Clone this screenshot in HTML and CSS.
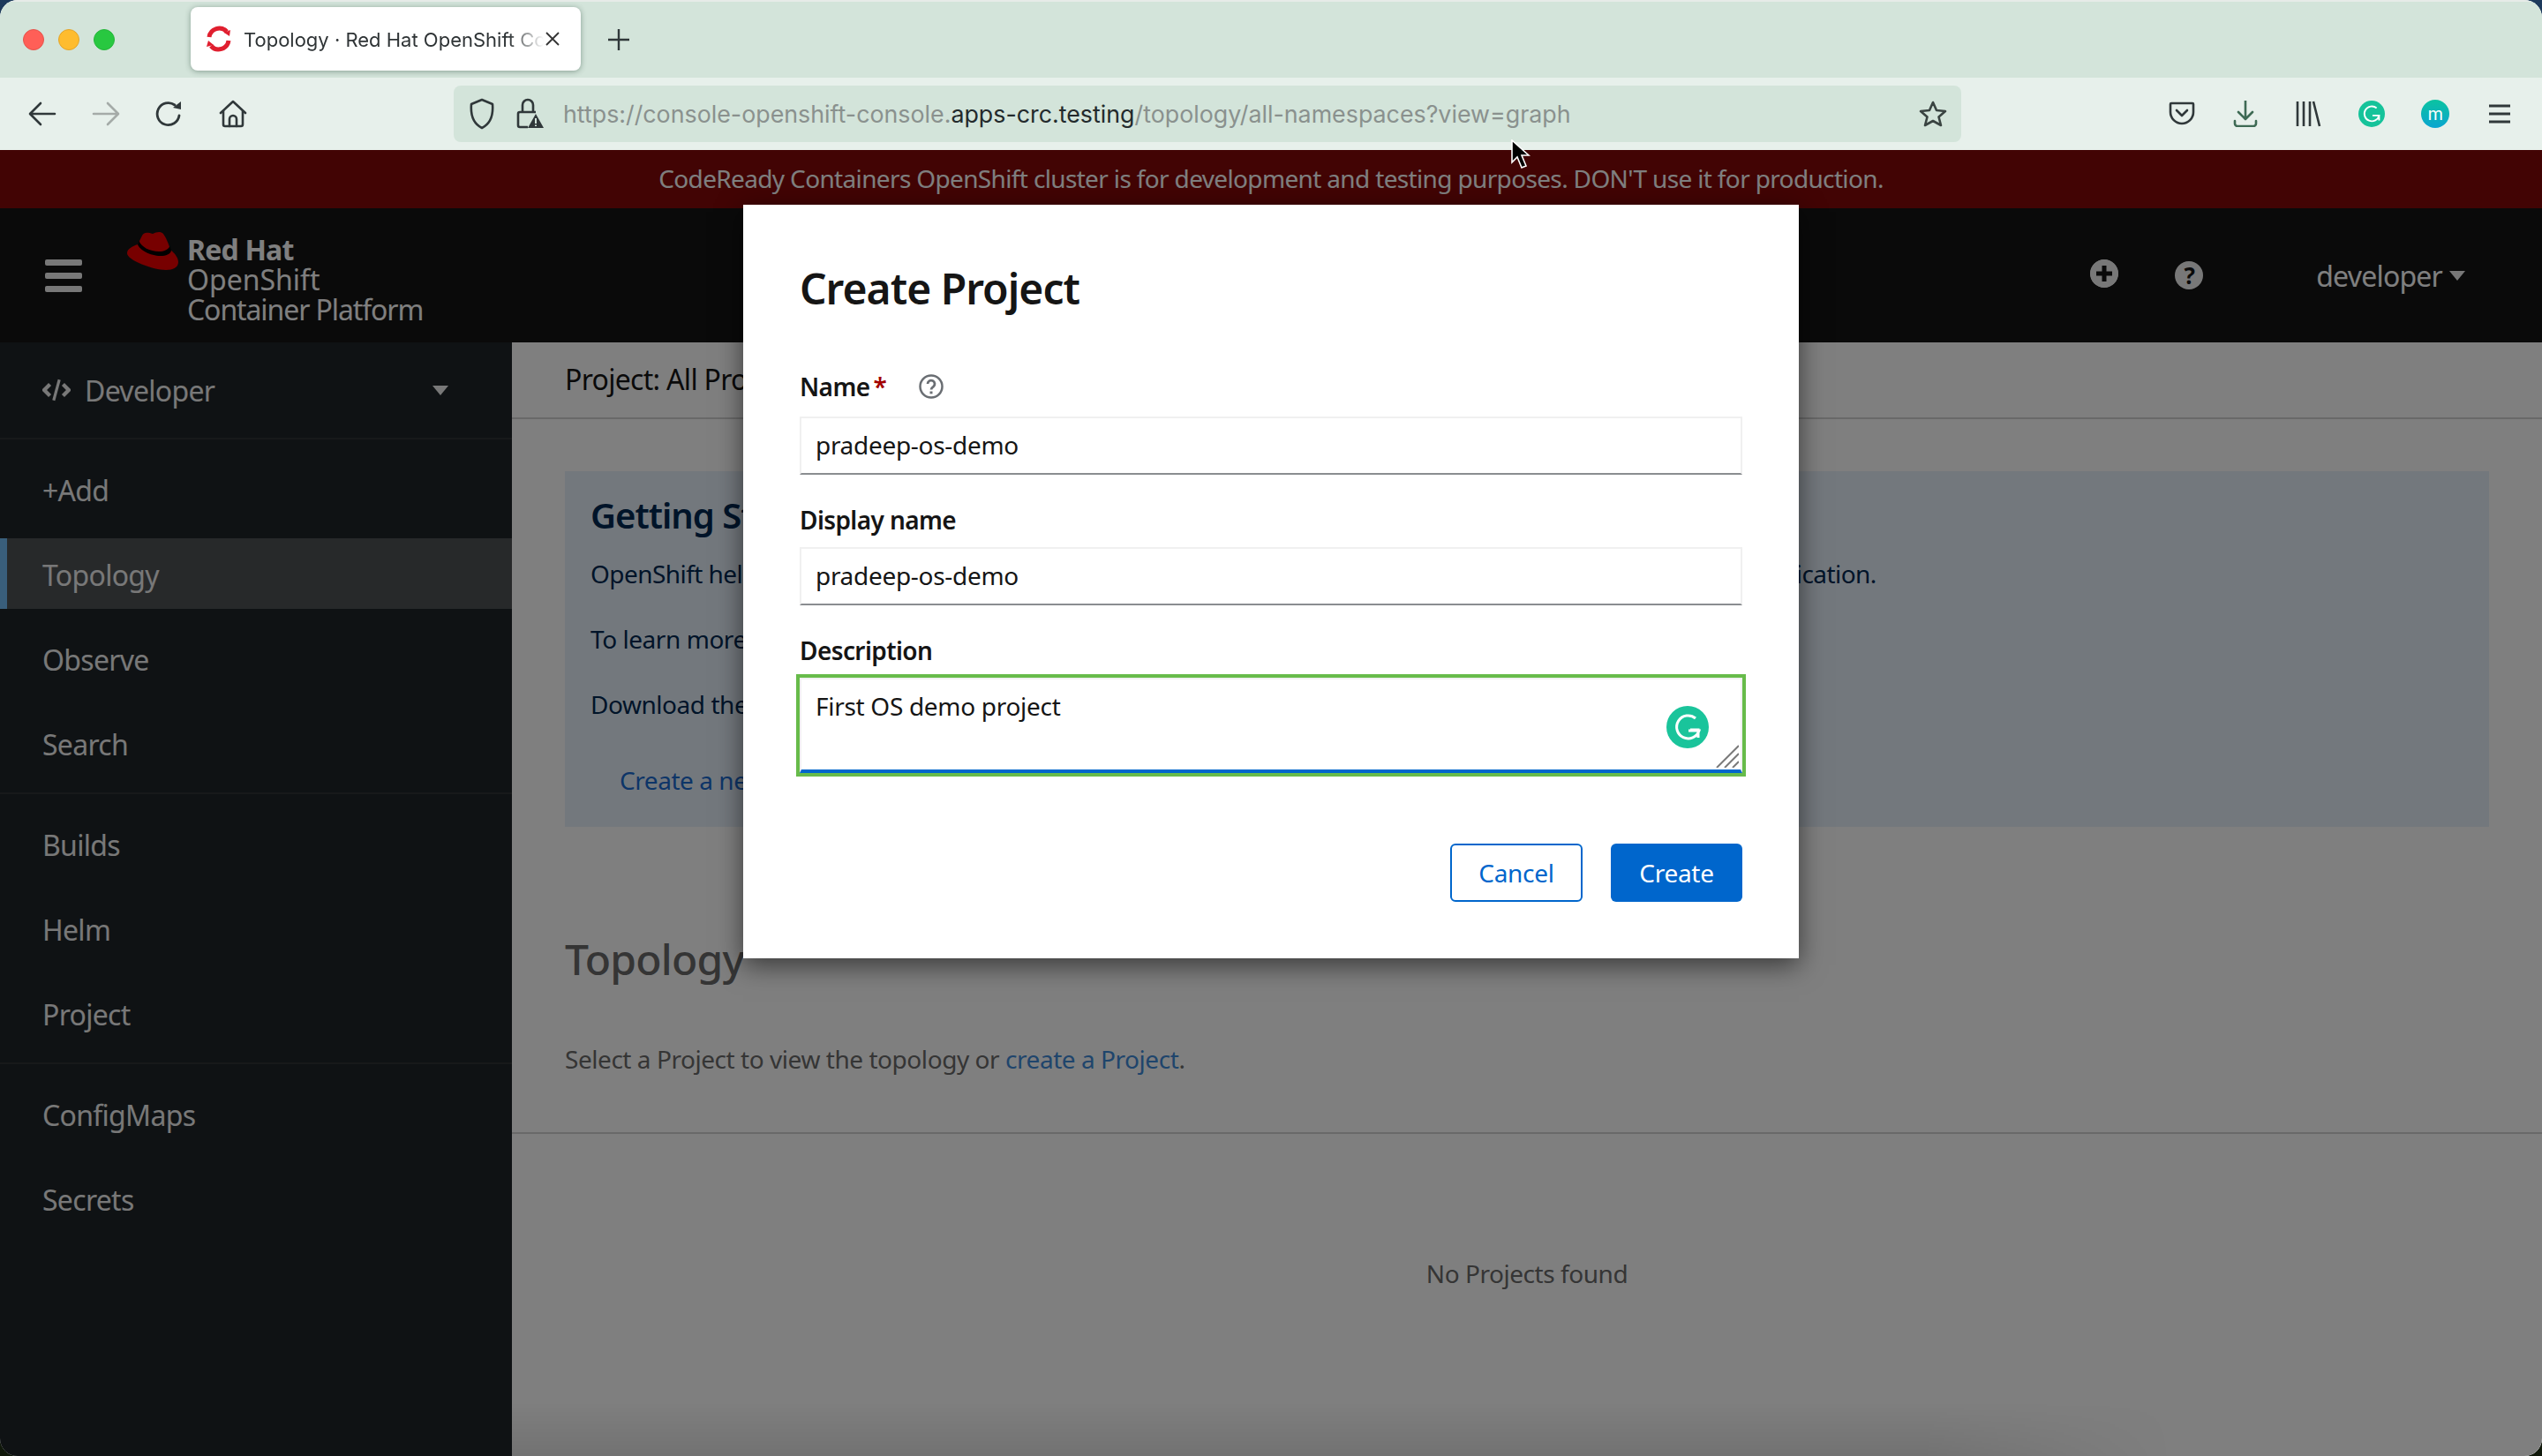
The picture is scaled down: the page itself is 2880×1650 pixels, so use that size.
FILE: index.html
```html
<!DOCTYPE html>
<html lang="en">
<head>
    <meta charset="UTF-8">
    <title>Topology · Red Hat OpenShift Container Platform</title>
    <link rel="stylesheet" href="styles.css">
</head>
<body>
<div class="window">
    <div class="titlebar">
        <div class="lights">
            <span class="light red"></span>
            <span class="light yellow"></span>
            <span class="light green"></span>
        </div>
        <div class="tab">
            <svg class="favicon" viewBox="0 0 32 32" fill="none" stroke="#e01f2f" stroke-width="5">
                <path d="M5 14A11.5 11.5 0 0 1 25 8"/>
                <path d="M27 18A11.5 11.5 0 0 1 7 24"/>
                <path d="M22 9l7-3-1 7z" fill="#e01f2f" stroke="none"/>
                <path d="M10 23l-8 2 2-7z" fill="#e01f2f" stroke="none"/>
            </svg>
            <span class="tab-title">Topology · Red Hat OpenShift Container Platform</span>
            <svg class="tab-close" viewBox="0 0 20 20" stroke="#333" stroke-width="1.8"><path d="M3 3l14 14M17 3L3 17"/></svg>
        </div>
        <svg class="new-tab" viewBox="0 0 24 24" stroke="#30383a" stroke-width="2.4"><path d="M12 0v24M0 12h24"/></svg>
    </div>

    <div class="toolbar">
        <div class="nav-buttons">
            <svg class="tool-icon" viewBox="0 0 32 32" fill="none" stroke="#30383a" stroke-width="2.6" stroke-linecap="round" stroke-linejoin="round"><path d="M30 16H3M14 4L2 16l12 12"/></svg>
            <svg class="tool-icon" viewBox="0 0 32 32" fill="none" stroke="#a5aba8" stroke-width="2.6" stroke-linecap="round" stroke-linejoin="round"><path d="M2 16h27M18 4l12 12-12 12"/></svg>
            <svg class="tool-icon" viewBox="0 0 32 32" fill="none" stroke="#30383a" stroke-width="2.8" stroke-linecap="round"><path d="M27 18A12.5 12.5 0 1 1 22 6"/><path d="M20 9L29 2v9z" fill="#30383a" stroke="none"/></svg>
            <svg class="tool-icon" viewBox="0 0 32 32" fill="none" stroke="#30383a" stroke-width="2.6" stroke-linejoin="round" stroke-linecap="round"><path d="M2 15L16 2l14 13"/><path d="M5 13v15a2 2 0 0 0 2 2h18a2 2 0 0 0 2-2V13"/><path d="M12 30v-8a4 4 0 0 1 8 0v8"/></svg>
        </div>
        <div class="urlbar">
            <svg class="url-shield" viewBox="0 0 30 36" fill="none" stroke="#30383a" stroke-width="2.6" stroke-linejoin="round"><path d="M15 2l12 5c1 12-2 22-12 27C5 29 2 19 3 7z"/></svg>
            <svg class="url-lock" viewBox="0 0 32 36" fill="none" stroke="#30383a" stroke-width="2.6"><path d="M8 16V8a6 6 0 0 1 12 0v8"/><path d="M14 33H5a2 2 0 0 1-2-2V18a2 2 0 0 1 2-2h18"/><path d="M23 18l9 16H14z" fill="#30383a" stroke="none"/><path d="M23 23v6M23 30.5v1.5" stroke="#d3e4da" stroke-width="2"/></svg>
            <span class="url-text">https://console-openshift-console.<b>apps-crc.testing</b>/topology/all-namespaces?view=graph</span>
            <svg class="url-star" viewBox="0 0 32 32" fill="none" stroke="#3a4442" stroke-width="2.6" stroke-linejoin="round"><path d="M16 3l4 9 10 1-7.500 6.500L25 29l-9-5-9 5 2.500-9.500L2 13l10-1z"/></svg>
        </div>
        <div class="addons">
            <svg class="addon" viewBox="0 0 30 30" fill="none" stroke="#30383a" stroke-width="2.600" stroke-linejoin="round" stroke-linecap="round"><path d="M3 3h24a1 1 0 0 1 1 1v9a13 13 0 0 1-26 0V4a1 1 0 0 1 1-1z"/><path d="M9 11l6 6 6-6"/></svg>
            <svg class="addon" viewBox="0 0 30 30" fill="none" stroke="#3e6a54" stroke-width="2.600" stroke-linecap="round" stroke-linejoin="round"><path d="M15 0v20M7 13l8 8 8-8"/><path d="M3 23v3a3 3 0 0 0 3 3h18a3 3 0 0 0 3-3v-3"/></svg>
            <svg class="addon" viewBox="0 0 30 30" fill="none" stroke="#30383a" stroke-width="2.600"><path d="M3 1v28M10 1v28M17 1v28M21 1l7 28"/></svg>
            <svg class="addon" viewBox="0 0 32 32"><circle cx="16" cy="16" r="16" fill="#15c39a"/><path d="M22 9a9 9 0 1 0 3 9h-8M25 24v-6h-6" fill="none" stroke="#fff" stroke-width="2"/></svg>
            <span class="addon-m">m</span>
            <svg class="addon" viewBox="0 0 30 30" stroke="#30383a" stroke-width="2.800"><path d="M3 6h24M3 15h24M3 24h24"/></svg>
        </div>
    </div>

    <div class="page">
        <div class="banner">CodeReady Containers OpenShift cluster is for development and testing purposes. DON'T use it for production.</div>

        <div class="masthead">
            <div class="hamburger"><span></span><span></span><span></span></div>
            <svg class="hat" viewBox="0 0 58 44">
                <path d="M17 5C19 1 23 1 29 3C33 1 38 0 41 3C44 7 47 14 49 21C54 25 58 30 58 35C58 41 52 44 44 44C30 44 0 33 0 25C0 20 6 17 12 15z" fill="#ee0000"/>
                <path d="M12 15C14 21 26 28 38 28C44 28 49 26 50 22L48.500 17C46 21 42 23 36 23C26 23 16 18 13.500 11z" fill="#000"/>
            </svg>
            <div class="brand">
                <div class="brand-top">Red Hat</div>
                <div>OpenShift</div>
                <div class="brand-sub">Container Platform</div>
            </div>
            <div class="mast-right">
                <svg class="round-icon plus" viewBox="0 0 32 32"><circle cx="16" cy="16" r="16" fill="#f0f0f0"/><path d="M16 7v18M7 16h18" stroke="#151515" stroke-width="5"/></svg>
                <span class="round-icon help">?</span>
                <span class="user">developer</span>
                <span class="caret"></span>
            </div>
        </div>

        <div class="layout">
            <aside class="sidebar">
                <div class="perspective">
                    <svg class="code-icon" viewBox="0 0 30 24" fill="none" stroke="#f0f0f0" stroke-width="4"><path d="M8 6l-6 6 6 6M22 6l6 6-6 6"/><path d="M18 1l-6 22" stroke-width="3"/></svg>
                    <span>Developer</span>
                    <span class="caret perspective-caret"></span>
                </div>
                <div class="nav-group">
                    <a class="nav-item">+Add</a>
                    <a class="nav-item current">Topology</a>
                    <a class="nav-item">Observe</a>
                    <a class="nav-item">Search</a>
                </div>
                <div class="nav-group">
                    <a class="nav-item">Builds</a>
                    <a class="nav-item">Helm</a>
                    <a class="nav-item">Project</a>
                </div>
                <div class="nav-group last">
                    <a class="nav-item">ConfigMaps</a>
                    <a class="nav-item">Secrets</a>
                </div>
            </aside>

            <main class="main">
                <div class="project-bar">Project: All Projects</div>
                <section class="getting-started">
                    <h2>Getting Started in OpenShift</h2>
                    <p class="intro">OpenShift helps you quickly develop, host, and scale applications. To get started, create a project for the application.</p>
                    <p>To learn more, visit the OpenShift documentation.</p>
                    <p>Download the oc command line tool.</p>
                    <a class="card-link">Create a new project</a>
                </section>
                <div class="topology-head">
                    <h1>Topology</h1>
                    <p>Select a Project to view the topology or <a>create a Project</a>.</p>
                </div>
                <div class="empty">No Projects found</div>
            </main>
        </div>

        <div class="backdrop">
            <div class="modal">
                <h2 class="modal-title">Create Project</h2>
                <div class="field name-field">
                    <label>Name <span class="req">*</span><svg class="field-help" viewBox="0 0 28 28" fill="none" stroke="#6a6e73" stroke-width="2.500"><circle cx="14" cy="14" r="12.500"/><path d="M10 11a4 4 0 1 1 6.500 3.200c-1.500 1-2.500 1.800-2.500 3.300" stroke-width="2.800"/><path d="M14 19.500v2.800" stroke-width="3"/></svg></label>
                    <div class="input">pradeep-os-demo</div>
                </div>
                <div class="field">
                    <label>Display name</label>
                    <div class="input">pradeep-os-demo</div>
                </div>
                <div class="field">
                    <label>Description</label>
                    <div class="textarea">
                        First OS demo project
                        <svg class="grammarly" viewBox="0 0 48 48"><circle cx="24" cy="24" r="24" fill="#1ac49b"/><path d="M33 14a13 13 0 1 0 4 14H25M36 36v-9h-9" fill="none" stroke="#fff" stroke-width="3"/></svg>
                        <svg class="resize" viewBox="0 0 26 26" stroke="#7a7a7a" stroke-width="2"><path d="M1 26L26 1M10 26L26 10M19 26l7-7"/></svg>
                    </div>
                </div>
                <div class="modal-actions">
                    <button class="btn secondary">Cancel</button>
                    <button class="btn primary">Create</button>
                </div>
            </div>
            <div class="bottom-shade"></div>
        </div>

        <svg class="cursor" viewBox="0 0 22 34"><path d="M1 1v25l6-6 5 12 5-2-5-12h8z" fill="#000" stroke="#fff" stroke-width="1.600"/></svg>
    </div>
</div>
</body>
</html>
```

FILE: styles.css
```css
* {
    box-sizing: border-box;
}
html, body {
    margin: 0;
    padding: 0;
    height: 100%;
}
body {
    background: linear-gradient(#1d3a5c, #10180a);
    font-family: "Noto Sans", sans-serif;
    font-size: 28px;
    overflow: hidden;
}
h1, h2, p {
    margin: 0;
    font-weight: normal;
}

.window {
    display: flex;
    flex-direction: column;
    height: 1650px;
    border-radius: 20px;
    overflow: hidden;
    background: #fff;
}

/* browser chrome */
.titlebar {
    display: flex;
    align-items: center;
    height: 88px;
    background: #d3e4da;
    border-top: 2px solid #e6ebe8;
    padding-left: 26px;
}
.lights {
    display: flex;
    gap: 16px;
    width: 190px;
}
.light {
    width: 24px;
    height: 24px;
    border-radius: 50%;
}
.light.red { background: #ff5f57; border: 1px solid #e5534b; }
.light.yellow { background: #febc2e; border: 1px solid #e3a52a; }
.light.green { background: #28c840; border: 1px solid #25b53a; }

.tab {
    display: flex;
    align-items: center;
    width: 442px;
    height: 72px;
    margin-top: -2px;
    padding-left: 16px;
    background: #fff;
    border-radius: 8px;
    box-shadow: 0 1px 6px rgba(40, 70, 55, 0.45);
}
.favicon {
    width: 32px;
    height: 32px;
    flex: none;
}
.tab-title {
    width: 340px;
    margin-left: 12px;
    padding-top: 2px;
    font-family: Inter, sans-serif;
    font-size: 22px;
    color: #2f3436;
    white-space: nowrap;
    overflow: hidden;
    -webkit-mask-image: linear-gradient(to right, #000 300px, transparent 340px);
    mask-image: linear-gradient(to right, #000 300px, transparent 340px);
}
.tab-close {
    width: 20px;
    height: 20px;
    flex: none;
}
.new-tab {
    width: 24px;
    height: 24px;
    margin-left: 31px;
}

.toolbar {
    display: flex;
    align-items: center;
    height: 82px;
    background: #e7f0eb;
}
.nav-buttons {
    display: flex;
    align-items: center;
    gap: 40px;
    width: 514px;
    padding-left: 32px;
}
.tool-icon {
    width: 32px;
    height: 32px;
}
.urlbar {
    display: flex;
    align-items: center;
    width: 1708px;
    height: 64px;
    background: #d3e4da;
    border-radius: 8px;
}
.url-shield {
    width: 30px;
    height: 36px;
    margin-left: 17px;
}
.url-lock {
    width: 32px;
    height: 36px;
    margin-left: 23px;
}
.url-text {
    margin-left: 22px;
    font-family: Inter, sans-serif;
    font-size: 26.8px;
    color: #8a918e;
    white-space: nowrap;
}
.url-text b {
    font-weight: normal;
    color: #232a2c;
}
.url-star {
    width: 32px;
    height: 32px;
    margin-left: auto;
    margin-right: 16px;
}
.addons {
    display: flex;
    align-items: center;
    gap: 41.6px;
    padding-left: 235px;
}
.addon {
    width: 30px;
    height: 30px;
    flex: none;
}
.addon-m {
    display: flex;
    align-items: center;
    justify-content: center;
    width: 32px;
    height: 32px;
    border-radius: 50%;
    background: linear-gradient(#0bc3a0, #0aa5d0);
    color: #fff;
    font-family: Inter, sans-serif;
    font-size: 20px;
    line-height: 1;
}

/* the console page */
.page {
    position: relative;
    flex: 1;
    display: flex;
    flex-direction: column;
    min-height: 0;
}
.banner {
    height: 66px;
    padding-top: 10px;
    background: #840808;
    color: #fff;
    text-align: center;
    line-height: 44px;
    letter-spacing: -0.65px;
}
.masthead {
    display: flex;
    align-items: center;
    height: 152px;
    background: #151515;
    color: #fff;
    padding-left: 51px;
}
.hamburger {
    display: flex;
    flex-direction: column;
    gap: 8px;
    width: 42px;
}
.hamburger span {
    height: 7px;
    border-radius: 2px;
    background: #f0f0f0;
}
.hat {
    width: 58px;
    height: 44px;
    margin-left: 51px;
    margin-top: -56px;
}
.brand {
    margin-left: 10px;
    padding-top: 10px;
    font-size: 32px;
    line-height: 34px;
}
.brand-top {
    font-weight: 700;
    letter-spacing: -0.8px;
}
.brand-sub {
    letter-spacing: -1.1px;
}
.mast-right {
    display: flex;
    align-items: center;
    margin-left: auto;
    padding-right: 87px;
    font-size: 32px;
    letter-spacing: -0.8px;
}
.round-icon {
    display: flex;
    align-items: center;
    justify-content: center;
    width: 32px;
    height: 32px;
    border-radius: 50%;
    background: #f0f0f0;
    color: #151515;
    font-weight: 700;
    font-size: 26px;
    line-height: 1;
}
.plus { margin-top: -4px; }
.help { margin-left: 64px; }
.user { margin-left: 128px; }
.caret {
    width: 0;
    height: 0;
    margin-left: 8px;
    border-left: 9px solid transparent;
    border-right: 9px solid transparent;
    border-top: 11px solid #f0f0f0;
}

.layout {
    flex: 1;
    display: flex;
    min-height: 0;
}
.sidebar {
    flex: none;
    width: 580px;
    background: #1e2528;
    color: #f0f0f0;
    font-size: 32px;
    letter-spacing: -0.7px;
}
.perspective {
    display: flex;
    align-items: center;
    height: 110px;
    padding: 0 72px 0 48px;
    border-bottom: 2px solid #2f3235;
}
.code-icon {
    width: 32px;
    height: 26px;
    margin-right: 16px;
}
.perspective-caret {
    margin-left: auto;
}
.nav-group {
    display: flex;
    flex-direction: column;
    gap: 16px;
    padding: 16px 0;
    border-bottom: 2px solid #2f3235;
}
.nav-group.last {
    border-bottom: 0;
}
.nav-item {
    display: flex;
    align-items: center;
    height: 80px;
    padding: 2px 0 0 48px;
}
.nav-item.current {
    background: #4f5255;
    border-left: 8px solid #73bcf7;
    padding-left: 40px;
}

.main {
    flex: 1;
    background: #fff;
    color: #151515;
    letter-spacing: -0.45px;
}
.project-bar {
    height: 87px;
    padding: 0 60px;
    line-height: 84px;
    font-size: 32px;
    letter-spacing: -0.7px;
    border-bottom: 2px solid #d2d2d2;
}
.getting-started {
    height: 403px;
    margin: 59px 60px 0;
    padding: 20px 29px;
    background: #e7f1fa;
    color: #002952;
}
.getting-started h2 {
    font-size: 40px;
    font-weight: 600;
    line-height: 60px;
    margin-bottom: 16px;
    letter-spacing: -1px;
}
.getting-started p {
    line-height: 40px;
    margin-bottom: 34px;
}
.getting-started .intro {
    white-space: nowrap;
    letter-spacing: -0.56px;
}
.card-link {
    display: block;
    margin: 47px 0 0 33px;
    color: #1a6ad0;
}
.topology-head {
    height: 348px;
    padding: 120px 60px 0;
    border-bottom: 2px solid #d2d2d2;
    color: #6a6a6a;
}
.topology-head h1 {
    font-size: 48px;
    font-weight: 500;
    line-height: 60px;
    letter-spacing: -0.8px;
}
.topology-head p {
    margin-top: 63px;
    line-height: 40px;
}
.topology-head a {
    color: #3f8ad8;
}
.empty {
    padding-top: 138px;
    text-align: center;
    color: #6a6a6a;
    line-height: 40px;
}

/* modal */
.backdrop {
    position: absolute;
    top: 0;
    left: 0;
    right: 0;
    bottom: 0;
    display: flex;
    justify-content: center;
    align-items: flex-start;
    padding-top: 62px;
    background: rgba(0, 0, 0, 0.5);
}
.modal {
    width: 1196px;
    height: 854px;
    padding: 0 64px;
    background: #fff;
    color: #151515;
    letter-spacing: -0.3px;
    box-shadow: 0 8px 28px rgba(0, 0, 0, 0.55);
}
.modal-title {
    height: 190px;
    padding-top: 62px;
    font-size: 48px;
    font-weight: 600;
    line-height: 66px;
    letter-spacing: -1px;
}
.field label {
    display: flex;
    align-items: center;
    height: 34px;
    padding-bottom: 2px;
    font-weight: 600;
    line-height: 32px;
    letter-spacing: -0.6px;
}
.req {
    color: #a30000;
    margin-left: 4px;
}
.field-help {
    width: 28px;
    height: 28px;
    margin-left: 37px;
}
.input {
    height: 66px;
    margin-top: 13px;
    padding-left: 16px;
    border: 2px solid #f0f0f0;
    border-bottom-color: #8a8d90;
    line-height: 60px;
}
.name-field .input {
    margin-top: 16px;
}
.field + .field {
    margin-top: 35px;
}
.textarea {
    position: relative;
    height: 108px;
    margin-top: 13px;
    padding: 10px 16px;
    line-height: 40px;
    border: 2px solid #f0f0f0;
    border-bottom: 4px solid #06c;
    outline: 4px solid #67bb4a;
}
.grammarly {
    position: absolute;
    right: 36px;
    bottom: 24px;
    width: 48px;
    height: 48px;
}
.resize {
    position: absolute;
    right: 2px;
    bottom: 2px;
    width: 26px;
    height: 26px;
}
.modal-actions {
    display: flex;
    justify-content: flex-end;
    gap: 32px;
    margin-top: 80px;
}
.btn {
    width: 150px;
    height: 66px;
    border-radius: 6px;
    font-family: inherit;
    font-size: 28px;
    letter-spacing: -0.3px;
}
.btn.secondary {
    background: #fff;
    border: 2px solid #06c;
    color: #06c;
}
.btn.primary {
    width: 149px;
    background: #06c;
    border: 0;
    color: #fff;
}
.bottom-shade {
    position: absolute;
    left: 580px;
    bottom: 0;
    width: 1880px;
    height: 60px;
    background: linear-gradient(rgba(0, 0, 0, 0), rgba(0, 0, 0, 0.1));
    -webkit-mask-image: linear-gradient(to right, #000 85%, transparent);
    mask-image: linear-gradient(to right, #000 85%, transparent);
}
.cursor {
    position: absolute;
    left: 1712px;
    top: -12px;
    width: 22px;
    height: 34px;
}
```
